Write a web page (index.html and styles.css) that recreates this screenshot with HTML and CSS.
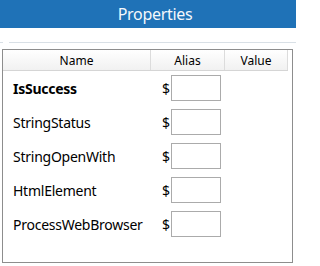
FILE: index.html
```html
<!DOCTYPE html>
<html>
<head>
<meta charset="utf-8">
<link rel="stylesheet" href="styles.css">
</head>
<body>
<div class="title"><span class="title-text">Properties</span></div>
<div class="divider"><span class="seg-a"></span><span class="seg-b"></span></div>
<div class="panel">
  <div class="grid-head">
    <div class="hcol hname">Name</div>
    <div class="hcol halias">Alias</div>
    <div class="hcol hvalue">Value</div>
  </div>
  <div class="rows">
    <div class="row">
      <div class="prop bold">IsSuccess</div>
      <div class="alias"><span class="dollar">$</span><span class="box"></span></div>
    </div>
    <div class="row">
      <div class="prop">StringStatus</div>
      <div class="alias"><span class="dollar">$</span><span class="box"></span></div>
    </div>
    <div class="row">
      <div class="prop">StringOpenWith</div>
      <div class="alias"><span class="dollar">$</span><span class="box"></span></div>
    </div>
    <div class="row">
      <div class="prop">HtmlElement</div>
      <div class="alias"><span class="dollar">$</span><span class="box"></span></div>
    </div>
    <div class="row">
      <div class="prop">ProcessWebBrowser</div>
      <div class="alias"><span class="dollar">$</span><span class="box"></span></div>
    </div>
  </div>
</div>
</body>
</html>
```

FILE: styles.css
```css
html, body {
  margin: 0;
  padding: 0;
  background: #ffffff;
}
body {
  width: 296px;
  height: 266px;
  overflow: hidden;
  font-family: "Noto Sans", "Open Sans", sans-serif;
  color: #000000;
}
.title {
  height: 28px;
  background: #1f72b7;
  color: #f4f8fc;
  display: flex;
  align-items: center;
  justify-content: center;
  padding-left: 14px;
  font-size: 16px;
  letter-spacing: -0.3px;
  line-height: 28px;
}
.divider {
  display: flex;
  margin-top: 14px;
  height: 1px;
}
.seg-a {
  width: 3px;
  background: #d9e0e6;
}
.seg-b {
  flex: 1;
  margin-left: 6px;
  background: #d9e0e6;
}
.panel {
  margin: 6px 3px 0 2px;
  height: 212px;
  border: 1px solid #8d8d8d;
}
.grid-head {
  display: flex;
  width: 285px;
  height: 20px;
  border-bottom: 1px solid #d5d5d5;
  background: linear-gradient(#ffffff, #f1f1f1);
  font-size: 12px;
}
.hcol {
  display: flex;
  align-items: center;
  justify-content: center;
  border-right: 1px solid #dcdcdc;
  box-sizing: border-box;
  height: 20px;
}
.hname { width: 148px; }
.halias { width: 74px; }
.hvalue { width: 63px; }
.row {
  display: flex;
  align-items: center;
  height: 34px;
}
.prop {
  width: 138px;
  padding-left: 10px;
  font-size: 14px;
  letter-spacing: -0.25px;
  white-space: nowrap;
}
.bold {
  font-weight: bold;
}
.alias {
  display: flex;
  align-items: center;
  padding-left: 11px;
  font-size: 14px;
}
.dollar {
  width: 9px;
}
.box {
  width: 50px;
  height: 26px;
  box-sizing: border-box;
  border: 1px solid #ababab;
  background: #ffffff;
}
```
